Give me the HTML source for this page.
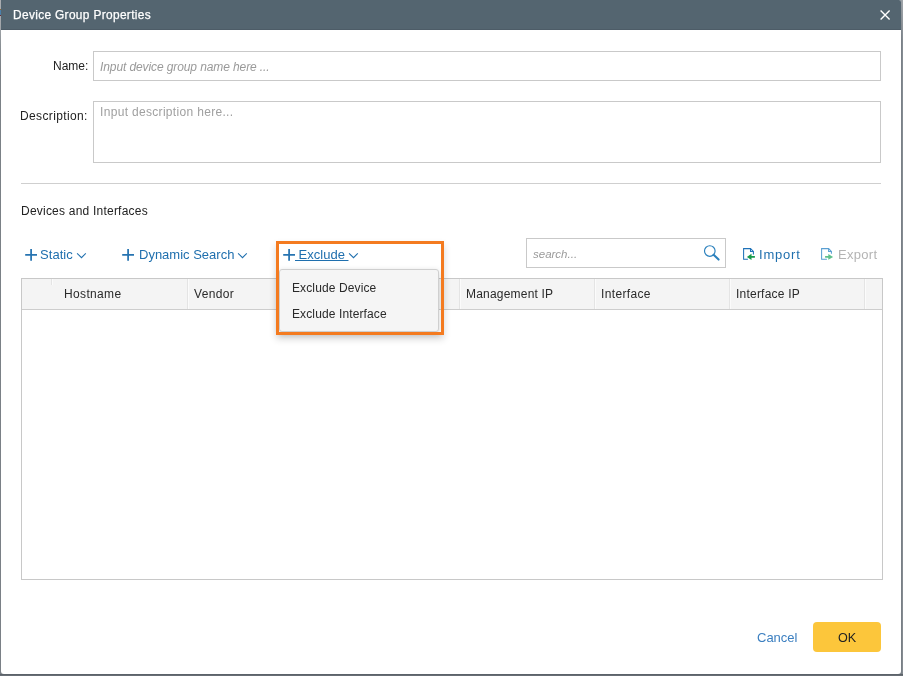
<!DOCTYPE html>
<html>
<head>
<meta charset="utf-8">
<style>
html,body{margin:0;padding:0;}
body{width:903px;height:676px;position:relative;overflow:hidden;background:#80868c;font-family:"Liberation Sans",sans-serif;}
.abs{position:absolute;}
#dlg{position:absolute;left:1px;top:0;width:900px;height:674px;background:#fff;border-radius:0 2px 3px 3px;overflow:hidden;}
#hdr{position:absolute;left:0;top:0;width:900px;height:29px;background:#546570;border-bottom:1px solid #4d5c67;}
.t{position:absolute;white-space:nowrap;line-height:1;will-change:transform;}
.lbl{font-size:12px;color:#222;}
.inp{position:absolute;border:1px solid #c9c9c9;box-sizing:border-box;background:#fff;}
.ph{font-size:12px;color:#9a9a9a;font-style:italic;}
.blue{color:#1f6fae;font-size:13px;}
.th{font-size:12px;color:#2a2a2a;letter-spacing:0.35px;}
.vsep{position:absolute;top:279px;width:1px;height:30px;background:#e4e4e4;border-right:1px solid #fbfbfb;}
</style>
</head>
<body>
<div class="abs" style="left:0;top:0;width:1px;height:676px;background:linear-gradient(#aaadb1 0px,#a3a7ab 25px,#8a9095 45px,#7b8186 70px,#7a8086 676px);"></div>
<div class="abs" style="left:0;top:9px;width:1px;height:1px;background:#8a6a3a;"></div>
<div class="abs" style="left:0;top:10px;width:1px;height:5px;background:#4a80ab;"></div>
<div class="abs" style="left:0;top:15px;width:1px;height:1px;background:#6b2a35;"></div>
<div class="abs" style="left:901px;top:0;width:1px;height:676px;background:linear-gradient(#9aa0a5 0px,#7a8188 40px,#787f86 676px);"></div>
<div class="abs" style="left:902px;top:0;width:1px;height:676px;background:linear-gradient(#a0a5aa 0px,#858c92 40px,#858b91 676px);"></div>
<div class="abs" style="left:0;top:674px;width:903px;height:1px;background:#5c636a;"></div>
<div class="abs" style="left:0;top:675px;width:903px;height:1px;background:#686e75;"></div>
<div id="dlg">
  <div id="hdr"></div>
  <div class="t" style="left:12.2px;top:9.5px;font-size:11.9px;letter-spacing:0.34px;color:#fff;-webkit-text-stroke:0.25px #fff;">Device Group Properties</div>
  <svg class="abs" style="left:878px;top:9px" width="13" height="13" viewBox="0 0 13 13"><path d="M1.6 1.6L10.6 10.6M10.6 1.6L1.6 10.6" stroke="#fff" stroke-width="1.4" fill="none"/></svg>

  <div class="t lbl" style="right:813px;top:60px;">Name:</div>
  <div class="inp" style="left:92px;top:51px;width:788px;height:30px;"></div>
  <div class="t ph" style="left:99px;top:61px;letter-spacing:-0.1px;">Input device group name here ...</div>

  <div class="t lbl" style="right:813px;top:110px;letter-spacing:0.36px;">Description:</div>
  <div class="inp" style="left:92px;top:101px;width:788px;height:62px;"></div>
  <div class="t" style="left:98.8px;top:106px;font-size:12px;color:#a0a0a0;letter-spacing:0.32px;">Input description here...</div>

  <div class="abs" style="left:20px;top:183px;width:860px;height:1px;background:#cfcfcf;"></div>

  <div class="t lbl" style="left:19.6px;top:205px;letter-spacing:0.22px;">Devices and Interfaces</div>

  <!-- toolbar -->
  <svg class="abs" style="left:24px;top:248px" width="13" height="13" viewBox="0 0 13 13"><path d="M6.1 1V12.8M0.2 6.8H12" stroke="#2774b1" stroke-width="1.75" fill="none"/></svg>
  <div class="t blue" style="left:39.4px;top:248px;letter-spacing:0.05px;">Static</div>
  <svg class="abs" style="left:75px;top:252px" width="12" height="8" viewBox="0 0 12 8"><path d="M1.1 1.3L5.5 5.7L9.8 1.3" stroke="#1f6fae" stroke-width="1.05" fill="none"/></svg>

  <svg class="abs" style="left:121px;top:248px" width="13" height="13" viewBox="0 0 13 13"><path d="M6.1 1V12.8M0.2 6.8H12" stroke="#2774b1" stroke-width="1.75" fill="none"/></svg>
  <div class="t blue" style="left:137.5px;top:248px;">Dynamic Search</div>
  <svg class="abs" style="left:236.3px;top:252px" width="12" height="8" viewBox="0 0 12 8"><path d="M1.1 1.3L5.5 5.7L9.8 1.3" stroke="#1f6fae" stroke-width="1.05" fill="none"/></svg>

  <svg class="abs" style="left:282px;top:248px" width="13" height="13" viewBox="0 0 13 13"><path d="M6.1 1V12.8M0.2 6.8H12" stroke="#2774b1" stroke-width="1.75" fill="none"/></svg>
  <div class="t blue" style="left:294px;top:248px;text-decoration:underline;">&nbsp;Exclude&nbsp;</div>
  <svg class="abs" style="left:346.5px;top:252px" width="12" height="8" viewBox="0 0 12 8"><path d="M1.1 1.3L5.5 5.7L9.8 1.3" stroke="#1f6fae" stroke-width="1.05" fill="none"/></svg>

  <!-- search -->
  <div class="inp" style="left:525px;top:238px;width:200px;height:30px;"></div>
  <div class="t ph" style="left:531.5px;top:249px;font-size:11.5px;">search...</div>
  <svg class="abs" style="left:699px;top:242px" width="24" height="22" viewBox="0 0 24 22"><circle cx="9.8" cy="9.0" r="5.3" stroke="#2a80bd" stroke-width="1.15" fill="none"/><path d="M13.6 12.8L18.6 17.6" stroke="#2a80bd" stroke-width="2.1" stroke-linecap="round"/></svg>

  <!-- import/export -->
  <svg class="abs" style="left:739px;top:245px" width="18" height="18" viewBox="0 0 18 18"><path d="M7.9 14.2H3.6V3.6H10.5L13.4 6.5V9.5" stroke="#1f72b8" stroke-width="1.05" fill="none"/><path d="M10.5 3.6V6.4H13.4" stroke="#1f72b8" stroke-width="1.05" fill="none"/><path d="M6.9 11.9L11.5 8.7V10.9H14.9V12.8H11.5V15.1Z" fill="#17994a"/></svg>
  <div class="t blue" style="left:757.5px;top:248px;letter-spacing:0.8px;">Import</div>

  <svg class="abs" style="left:816px;top:245px" width="18" height="18" viewBox="0 0 18 18"><path d="M9.9 14.2H4.6V3.6H11.6L14.4 6.4V8.7" stroke="#5a9fd2" stroke-width="1.05" fill="none"/><path d="M11.6 3.6V6.4H14.4" stroke="#5a9fd2" stroke-width="1.05" fill="none"/><path d="M16.1 11.9L11.3 8.9V10.9H8.1V12.8H11.3V14.8Z" fill="#5fc08c"/></svg>
  <div class="t" style="left:836.5px;top:248px;font-size:13px;color:#b4b4b4;letter-spacing:0.3px;">Export</div>

  <!-- table -->
  <div class="abs" style="left:20px;top:278px;width:862px;height:302px;border:1px solid #c8c8c8;box-sizing:border-box;"></div>
  <div class="abs" style="left:21px;top:279px;width:860px;height:30px;background:#f4f4f4;border-bottom:1px solid #cdcdcd;"></div>
  <div class="vsep" style="left:50px;height:6px;"></div>
  <div class="vsep" style="left:186px;"></div>
  <div class="vsep" style="left:322px;"></div>
  <div class="vsep" style="left:458px;"></div>
  <div class="vsep" style="left:593px;"></div>
  <div class="vsep" style="left:728px;"></div>
  <div class="vsep" style="left:863px;"></div>
  <div class="t th" style="left:63px;top:288px;">Hostname</div>
  <div class="t th" style="left:193px;top:288px;">Vendor</div>
  <div class="t th" style="left:465px;top:288px;letter-spacing:0.2px;">Management IP</div>
  <div class="t th" style="left:599.8px;top:288px;">Interface</div>
  <div class="t th" style="left:735px;top:288px;letter-spacing:0.22px;">Interface IP</div>

  <!-- dropdown menu -->
  <div class="abs" style="left:278px;top:269px;width:160px;height:63px;background:#f5f5f5;border:1px solid #cfcfcf;border-radius:3px;box-sizing:border-box;box-shadow:0 2px 6px rgba(0,0,0,0.18);"></div>
  <div class="t" style="left:291px;top:282px;font-size:12px;color:#2a2a2a;letter-spacing:0.12px;">Exclude Device</div>
  <div class="t" style="left:291px;top:308px;font-size:12px;color:#2a2a2a;letter-spacing:0.12px;">Exclude Interface</div>

  <!-- orange highlight -->
  <div class="abs" style="left:275px;top:241px;width:168px;height:94px;border:3px solid #f47b20;box-sizing:border-box;box-shadow:0 4px 7px rgba(0,0,0,0.16);"></div>

  <!-- footer -->
  <div class="t" style="left:756px;top:631px;font-size:13px;color:#3b7fc0;">Cancel</div>
  <div class="abs" style="left:812px;top:622px;width:68px;height:30px;background:#fcc63b;border-radius:4px;"></div>
  <div class="t" style="left:837px;top:631.6px;font-size:12.6px;color:#222;">OK</div>
</div>
</body>
</html>
